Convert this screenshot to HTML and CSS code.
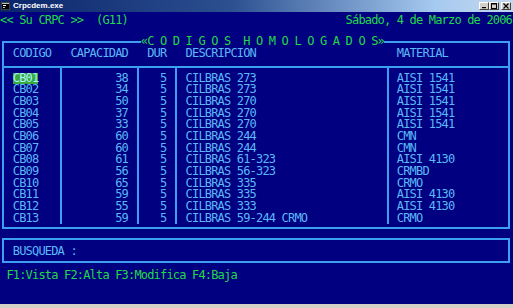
FILE: index.html
```html
<!DOCTYPE html>
<html lang="es">
<head>
  <meta charset="UTF-8">
  <title>Crpcdem.exe</title>
  <link rel="stylesheet" href="styles.css">
</head>
<body>

  <div class="window">
    <!-- barra de titulo -->
    <div class="titlebar">
      <svg class="app-icon" width="9" height="8" viewBox="0 0 9 8">
        <rect x="0" y="0" width="9" height="8" fill="#c0c0c0"/>
        <rect x="0.5" y="0.5" width="8" height="7" fill="none" stroke="#404040"/>
        <rect x="1" y="2" width="7" height="5" fill="#000"/>
        <rect x="2" y="3" width="3" height="1" fill="#fff"/>
        <rect x="2" y="5" width="2" height="1" fill="#c0c0c0"/>
      </svg>
      <span class="title">Crpcdem.exe</span>
      <div class="controls">
        <div class="ctl-group">
          <span class="ctl"><svg width="8" height="6" viewBox="0 0 8 6"><rect x="2" y="4" width="4" height="1.2" fill="#000"/></svg></span>
          <span class="ctl"><svg width="8" height="6" viewBox="0 0 8 6"><rect x="1.5" y="0.5" width="5" height="5" fill="none" stroke="#000"/><rect x="1" y="0" width="6" height="1.5" fill="#000"/></svg></span>
        </div>
        <span class="ctl"><svg width="8" height="6" viewBox="0 0 8 6"><path d="M1.5 0.5 L6.5 5.5 M6.5 0.5 L1.5 5.5" stroke="#000" stroke-width="1.2"/></svg></span>
      </div>
    </div>

    <!-- consola -->
    <div class="console">
      <div class="topline green"><span class="txt">&lt;&lt; Su CRPC &gt;&gt;  (G11)</span><span class="txt">Sábado, 4 de Marzo de 2006</span></div>

      <fieldset class="box list">
        <legend class="green txt">«C O D I G O S  H O M O L O G A D O S»</legend>
        <div class="row head">
          <span class="cod">CODIGO</span>
          <span class="cap head-cap">CAPACIDAD</span>
          <span class="dur">DUR</span>
          <span class="desc">DESCRIPCION</span>
          <span class="mat">MATERIAL</span>
        </div>
        <div class="rows">
          <div class="row"><span class="cod"><span class="sel">CB01</span></span><span class="cap">38</span><span class="dur">5</span><span class="desc">CILBRAS 273</span><span class="mat">AISI 1541</span></div>
          <div class="row"><span class="cod">CB02</span><span class="cap">34</span><span class="dur">5</span><span class="desc">CILBRAS 273</span><span class="mat">AISI 1541</span></div>
          <div class="row"><span class="cod">CB03</span><span class="cap">50</span><span class="dur">5</span><span class="desc">CILBRAS 270</span><span class="mat">AISI 1541</span></div>
          <div class="row"><span class="cod">CB04</span><span class="cap">37</span><span class="dur">5</span><span class="desc">CILBRAS 270</span><span class="mat">AISI 1541</span></div>
          <div class="row"><span class="cod">CB05</span><span class="cap">33</span><span class="dur">5</span><span class="desc">CILBRAS 270</span><span class="mat">AISI 1541</span></div>
          <div class="row"><span class="cod">CB06</span><span class="cap">60</span><span class="dur">5</span><span class="desc">CILBRAS 244</span><span class="mat">CMN</span></div>
          <div class="row"><span class="cod">CB07</span><span class="cap">60</span><span class="dur">5</span><span class="desc">CILBRAS 244</span><span class="mat">CMN</span></div>
          <div class="row"><span class="cod">CB08</span><span class="cap">61</span><span class="dur">5</span><span class="desc">CILBRAS 61-323</span><span class="mat">AISI 4130</span></div>
          <div class="row"><span class="cod">CB09</span><span class="cap">56</span><span class="dur">5</span><span class="desc">CILBRAS 56-323</span><span class="mat">CRMBD</span></div>
          <div class="row"><span class="cod">CB10</span><span class="cap">65</span><span class="dur">5</span><span class="desc">CILBRAS 335</span><span class="mat">CRMO</span></div>
          <div class="row"><span class="cod">CB11</span><span class="cap">59</span><span class="dur">5</span><span class="desc">CILBRAS 335</span><span class="mat">AISI 4130</span></div>
          <div class="row"><span class="cod">CB12</span><span class="cap">55</span><span class="dur">5</span><span class="desc">CILBRAS 333</span><span class="mat">AISI 4130</span></div>
          <div class="row"><span class="cod">CB13</span><span class="cap">59</span><span class="dur">5</span><span class="desc">CILBRAS 59-244 CRMO</span><span class="mat">CRMO</span></div>
        </div>
      </fieldset>

      <div class="box search">BUSQUEDA :</div>

      <div class="keys green">F1:Vista F2:Alta F3:Modifica F4:Baja</div>
    </div>
  </div>

</body>
</html>
```

FILE: styles.css
```css
* {
  margin: 0;
  padding: 0;
  box-sizing: border-box;
}

html, body {
  width: 513px;
  height: 308px;
  overflow: hidden;
  background: #d4d0c8;
}

.window {
  display: flex;
  flex-direction: column;
  height: 308px;
}

/* barra de titulo */
.titlebar {
  height: 12px;
  display: flex;
  align-items: center;
  gap: 3px;
  padding: 0 2px 0 1px;
  background: linear-gradient(to right, #0a246a 0%, #2c5090 45%, #a6caf0 85%, #c4d8ee 100%);
}

.title {
  flex: 1;
  color: #fff;
  font: bold 8px "Liberation Sans", sans-serif;
  line-height: 12px;
}

.controls {
  display: flex;
  gap: 2px;
}

.ctl-group {
  display: flex;
}

.ctl {
  width: 10px;
  height: 8px;
  display: flex;
  align-items: center;
  justify-content: center;
  background: #d4d0c8;
  border: 1px solid;
  border-color: #fff #404040 #404040 #fff;
}

/* consola */
.console {
  height: 292px;
  background: #000080;
  color: #5cb8f8;
  font-family: "DejaVu Sans Mono", monospace;
  font-size: 12px;
  letter-spacing: -0.825px;
  line-height: 11.67px;
  padding-top: 3.3px;
}

.txt { white-space: pre; }

.green { color: #22d84a; }

.topline {
  display: flex;
  justify-content: space-between;
  padding-right: 1px;
}

.box {
  border: 2px solid #3c9ff0;
  margin: 0 3px 0 2px;
}

.list {
  margin-top: 9.5px;
  padding: 0 0 2.5px;
  min-inline-size: 0;
}

.list legend {
  margin-left: 136.8px;
  padding: 0;
  line-height: 11.67px;
}

.row {
  display: grid;
  grid-template-columns: 58px 77px 38px 212px 119px;
  height: 11.67px;
}

.row span { white-space: pre; }

.head {
  height: auto;
  border-bottom: 2px solid #3c9ff0;
  padding-bottom: 6.66px;
}

/* separadores verticales de columnas */
.rows {
  padding-top: 4.3px;
  background:
    linear-gradient(#3c9ff0, #3c9ff0) 56px 0 / 2px 100% no-repeat,
    linear-gradient(#3c9ff0, #3c9ff0) 133px 0 / 2px 100% no-repeat,
    linear-gradient(#3c9ff0, #3c9ff0) 171px 0 / 2px 100% no-repeat,
    linear-gradient(#3c9ff0, #3c9ff0) 383px 0 / 2px 100% no-repeat;
}

.cod { padding-left: 8.8px; }
.cap { text-align: right; padding-right: 11px; }
.head .head-cap { text-align: left; padding-left: 8.4px; padding-right: 0; }
.dur { text-align: right; padding-right: 10.6px; }
.desc { padding-left: 8.6px; }
.mat { padding-left: 7.8px; }

.sel {
  display: inline-block;
  height: 11.67px;
  background: #3aa83a;
  color: #a8f4ff;
}

.search {
  margin-top: 9.3px;
  padding: 5.7px 0 4px 8.8px;
}

.keys {
  margin-top: 6.8px;
  padding-left: 6.4px;
}
```
